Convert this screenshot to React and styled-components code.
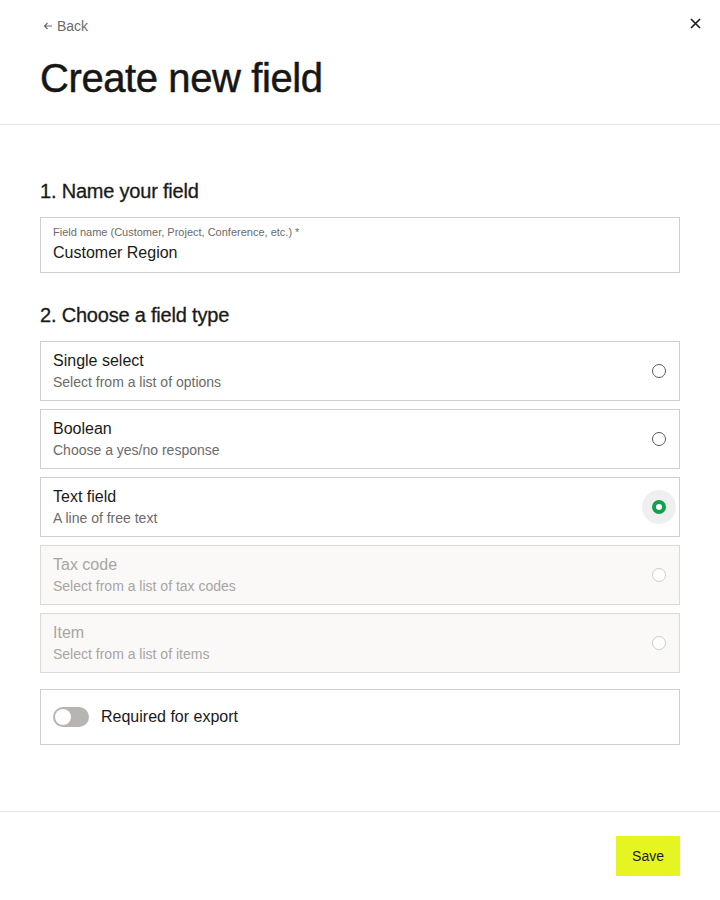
import styled, { createGlobalStyle } from 'styled-components';
import { useState } from 'react';

const GlobalStyle = createGlobalStyle`
  body {
    margin: 0;
    font-family: "Liberation Sans", Arial, sans-serif;
    color: #1a1a1a;
    background: #fff;
  }
`;

const Page = styled.div`
  width: 720px;
  min-height: 900px;
  display: flex;
  flex-direction: column;
`;

const Header = styled.div`
  padding: 17px 40px 22px;
  border-bottom: 1px solid #e8e8e8;
  position: relative;
`;

const BackLink = styled.a`
  display: inline-flex;
  align-items: center;
  gap: 4px;
  font-size: 14px;
  color: #6b6b6b;
  text-decoration: none;
  margin-left: 3px;
  line-height: 18px;
`;

const CloseButton = styled.button`
  position: absolute;
  top: 15px;
  right: 17px;
  border: 0;
  background: none;
  padding: 0;
  width: 16px;
  height: 16px;
  display: flex;
  align-items: center;
  justify-content: center;
  cursor: pointer;
`;

const Title = styled.h1`
  margin: 19px 0 0;
  font-size: 40px;
  font-weight: 400;
  letter-spacing: -0.4px;
  line-height: 48px;
  color: #161616;
  -webkit-text-stroke: 0.5px #161616;
`;

const Body = styled.div`
  padding: 52px 40px 0;
  flex: 1;
  display: flex;
  flex-direction: column;
`;

const SectionTitle = styled.h2`
  margin: 0 0 12px;
  font-size: 20px;
  font-weight: 400;
  letter-spacing: -0.2px;
  line-height: 28px;
  color: #1a1a1a;
  -webkit-text-stroke: 0.3px #1a1a1a;
`;

const InputBox = styled.label`
  display: flex;
  flex-direction: column;
  border: 1px solid #cfcfcf;
  padding: 7px 12px 8px;
  height: 56px;
  box-sizing: border-box;
  margin-bottom: 28px;
`;

const InputLabel = styled.span`
  font-size: 11px;
  color: #6b6b6b;
  line-height: 14px;
`;

const InputValue = styled.span`
  font-size: 16px;
  color: #1a1a1a;
  line-height: 24px;
  margin-top: 2px;
`;

const OptionList = styled.div`
  display: flex;
  flex-direction: column;
  gap: 8px;
`;

const Option = styled.div`
  display: flex;
  align-items: center;
  justify-content: space-between;
  height: 60px;
  box-sizing: border-box;
  border: 1px solid ${({ $disabled }) => ($disabled ? '#dcdad8' : '#cfcfcf')};
  background: ${({ $disabled }) => ($disabled ? '#faf9f8' : '#fff')};
  padding: 0 3px 0 12px;
`;

const OptionText = styled.div`
  display: flex;
  flex-direction: column;
`;

const OptionTitle = styled.span`
  font-size: 16px;
  line-height: 22px;
  color: ${({ $disabled }) => ($disabled ? '#a8a5a2' : '#1a1a1a')};
`;

const OptionDesc = styled.span`
  font-size: 14px;
  line-height: 20px;
  color: ${({ $disabled }) => ($disabled ? '#a8a5a2' : '#6b6b6b')};
`;

const RadioHalo = styled.span`
  width: 34px;
  height: 34px;
  border-radius: 50%;
  display: flex;
  align-items: center;
  justify-content: center;
  background: ${({ $checked }) => ($checked ? '#efefef' : 'transparent')};
`;

const Radio = styled.span`
  width: 14px;
  height: 14px;
  box-sizing: border-box;
  border-radius: 50%;
  border: ${({ $checked, $disabled }) =>
    $checked ? '4px solid #12a14a' : `1px solid ${$disabled ? '#cfcccc' : '#5a5a5a'}`};
  background: #fff;
`;

const ToggleRow = styled.div`
  margin-top: 16px;
  display: flex;
  align-items: center;
  gap: 12px;
  height: 56px;
  box-sizing: border-box;
  border: 1px solid #cfcfcf;
  padding: 0 12px;
`;

const Track = styled.button`
  width: 36px;
  height: 20px;
  border-radius: 10px;
  border: 0;
  padding: 2px;
  background: ${({ $on }) => ($on ? '#12a14a' : '#b8b4b2')};
  display: flex;
  justify-content: ${({ $on }) => ($on ? 'flex-end' : 'flex-start')};
  cursor: pointer;
`;

const Knob = styled.span`
  width: 16px;
  height: 16px;
  border-radius: 50%;
  background: #fff;
`;

const ToggleLabel = styled.span`
  font-size: 16px;
  color: #1a1a1a;
`;

const Footer = styled.div`
  border-top: 1px solid #e8e8e8;
  margin-top: 65px;
  padding: 24px 40px 24px;
  display: flex;
  justify-content: flex-end;
`;

const SaveButton = styled.button`
  background: #e6f522;
  border: 0;
  height: 40px;
  padding: 0 16px;
  font-family: inherit;
  font-size: 14px;
  color: #1a1a1a;
  cursor: pointer;
`;

const options = [
  { id: 'single', title: 'Single select', desc: 'Select from a list of options' },
  { id: 'boolean', title: 'Boolean', desc: 'Choose a yes/no response' },
  { id: 'text', title: 'Text field', desc: 'A line of free text' },
  { id: 'tax', title: 'Tax code', desc: 'Select from a list of tax codes', disabled: true },
  { id: 'item', title: 'Item', desc: 'Select from a list of items', disabled: true },
];

function App() {
  const [selected, setSelected] = useState('text');
  const [required, setRequired] = useState(false);

  return (
    <Page>
      <GlobalStyle />
      <Header>
        <BackLink href="#">
          <svg width="10" height="10" viewBox="0 0 10 10" fill="none" stroke="#6b6b6b" strokeWidth="1.2">
            <path d="M9 5H1.5M4.5 2L1.5 5l3 3" />
          </svg>
          Back
        </BackLink>
        <CloseButton aria-label="Close">
          <svg width="11" height="11" viewBox="0 0 11 11" stroke="#1a1a1a" strokeWidth="1.6">
            <path d="M1 1l9 9M10 1l-9 9" />
          </svg>
        </CloseButton>
        <Title>Create new field</Title>
      </Header>
      <Body>
        <SectionTitle>1. Name your field</SectionTitle>
        <InputBox>
          <InputLabel>Field name (Customer, Project, Conference, etc.) *</InputLabel>
          <InputValue>Customer Region</InputValue>
        </InputBox>
        <SectionTitle>2. Choose a field type</SectionTitle>
        <OptionList>
          {options.map((o) => (
            <Option key={o.id} $disabled={o.disabled} onClick={() => !o.disabled && setSelected(o.id)}>
              <OptionText>
                <OptionTitle $disabled={o.disabled}>{o.title}</OptionTitle>
                <OptionDesc $disabled={o.disabled}>{o.desc}</OptionDesc>
              </OptionText>
              <RadioHalo $checked={selected === o.id}>
                <Radio $checked={selected === o.id} $disabled={o.disabled} />
              </RadioHalo>
            </Option>
          ))}
        </OptionList>
        <ToggleRow>
          <Track $on={required} onClick={() => setRequired(!required)}>
            <Knob />
          </Track>
          <ToggleLabel>Required for export</ToggleLabel>
        </ToggleRow>
      </Body>
      <Footer>
        <SaveButton>Save</SaveButton>
      </Footer>
    </Page>
  );
}

export default App;
